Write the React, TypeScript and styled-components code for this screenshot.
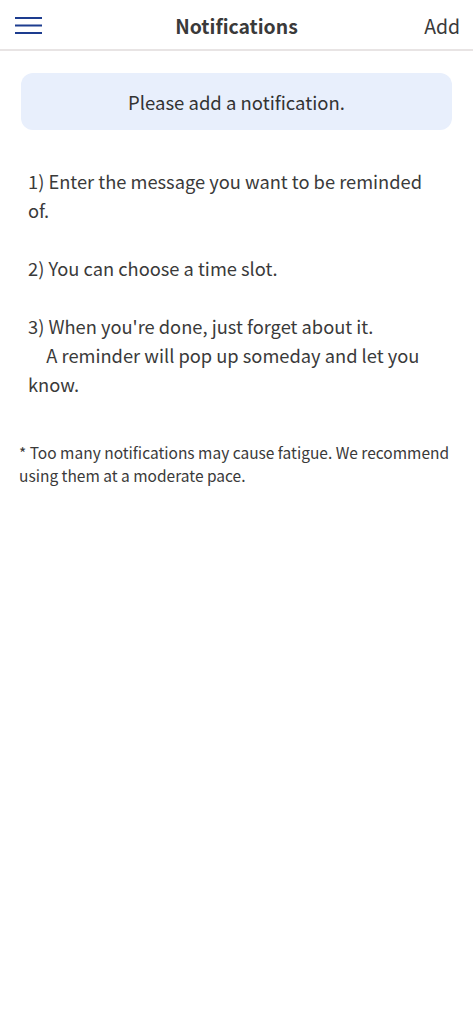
import React from 'react';
import styled, { createGlobalStyle } from 'styled-components';

const GlobalStyle = createGlobalStyle`
    html, body {
        margin: 0;
        padding: 0;
        background: #ffffff;
    }
    body {
        font-family: "Noto Sans CJK JP", "Noto Sans", sans-serif;
        color: #3a3a3a;
    }
`;

const Page = styled.div`
    display: flex;
    flex-direction: column;
    width: 100%;
    min-height: 100vh;
    background: #ffffff;
`;

const Header = styled.header`
    display: grid;
    grid-template-columns: 60px 1fr 60px;
    align-items: center;
    height: 51px;
    padding-top: 2px;
    border-bottom: 2px solid #e8e4e4;
    box-sizing: border-box;
`;

const MenuButton = styled.button`
    display: flex;
    align-items: center;
    justify-content: flex-start;
    background: none;
    border: none;
    padding: 0 0 0 15px;
    margin: 0;
    height: 100%;
    cursor: pointer;
`;

const Title = styled.h1`
    margin: 0;
    text-align: center;
    font-size: 19.4px;
    font-weight: 700;
    color: #3a3a3a;
`;

const AddButton = styled.button`
    background: none;
    border: none;
    padding: 0 13px 0 0;
    margin: 0;
    text-align: right;
    font-family: inherit;
    font-size: 19.4px;
    color: #3a3a3a;
    cursor: pointer;
`;

const Content = styled.main`
    display: flex;
    flex-direction: column;
    padding: 22px 21px 0 21px;
`;

const Banner = styled.div`
    display: flex;
    align-items: center;
    justify-content: center;
    height: 57px;
    border-radius: 12px;
    background: #e8effc;
    font-size: 18.5px;
    color: #333333;
`;

const Steps = styled.div`
    display: flex;
    flex-direction: column;
    gap: 29px;
    padding: 37px 7px 0 7px;
`;

const Step = styled.p`
    margin: 0;
    font-size: 18.3px;
    line-height: 29px;
    white-space: pre-wrap;
`;

const Note = styled.p`
    margin: 42px -14px 0 -2px;
    font-size: 15.5px;
    line-height: 23px;
`;

const HamburgerIcon = () => (
    <svg width="27" height="17" viewBox="0 0 27 17">
        <rect x="0" y="0" width="27" height="2" fill="#1d3c8f" />
        <rect x="0" y="7.5" width="27" height="2" fill="#1d3c8f" />
        <rect x="0" y="15" width="27" height="2" fill="#1d3c8f" />
    </svg>
);

const steps = [
    '1) Enter the message you want to be reminded of.',
    '2) You can choose a time slot.',
    "3) When you're done, just forget about it.\n\u3000A reminder will pop up someday and let you know.",
];

export default function App() {
    return (
        <>
            <GlobalStyle />
            <Page>
                <Header>
                    <MenuButton aria-label="Menu">
                        <HamburgerIcon />
                    </MenuButton>
                    <Title>Notifications</Title>
                    <AddButton>Add</AddButton>
                </Header>
                <Content>
                    <Banner>Please add a notification.</Banner>
                    <Steps>
                        {steps.map((s) => (
                            <Step key={s}>{s}</Step>
                        ))}
                    </Steps>
                    <Note>
                        * Too many notifications may cause fatigue. We recommend using them at a moderate pace.
                    </Note>
                </Content>
            </Page>
        </>
    );
}
